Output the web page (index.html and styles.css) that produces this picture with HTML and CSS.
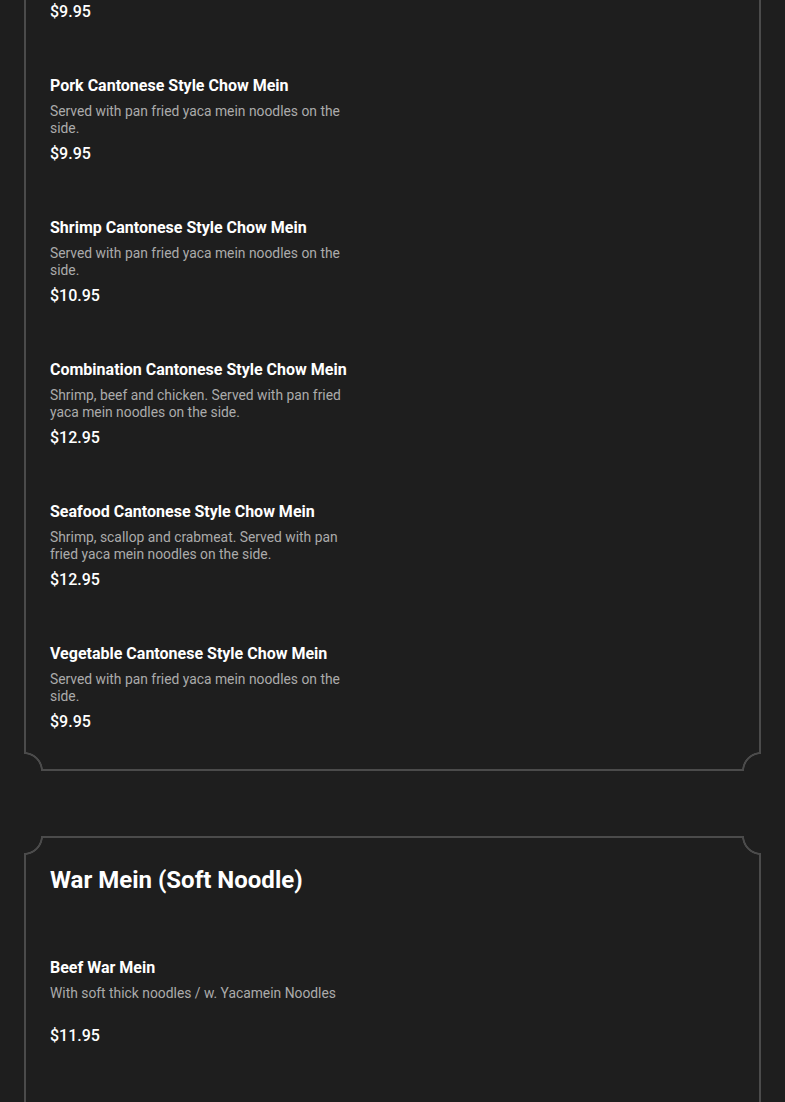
FILE: index.html
```html
<!DOCTYPE html>
<html lang="en">
<head>
<meta charset="utf-8">
<title>Menu</title>
<link rel="stylesheet" href="styles.css">
</head>
<body>
<main class="page">
  <section class="card card--continued">
    <span class="corner corner--bl"></span>
    <span class="corner corner--br"></span>
    <div class="items">
      <div class="item item--tail">
        <div class="item-price">$9.95</div>
      </div>
      <div class="item">
        <h3 class="item-title">Pork Cantonese Style Chow Mein</h3>
        <p class="item-desc">Served with pan fried yaca mein noodles on the side.</p>
        <div class="item-price">$9.95</div>
      </div>
      <div class="item">
        <h3 class="item-title">Shrimp Cantonese Style Chow Mein</h3>
        <p class="item-desc">Served with pan fried yaca mein noodles on the side.</p>
        <div class="item-price">$10.95</div>
      </div>
      <div class="item">
        <h3 class="item-title">Combination Cantonese Style Chow Mein</h3>
        <p class="item-desc">Shrimp, beef and chicken. Served with pan fried yaca mein noodles on the side.</p>
        <div class="item-price">$12.95</div>
      </div>
      <div class="item">
        <h3 class="item-title">Seafood Cantonese Style Chow Mein</h3>
        <p class="item-desc">Shrimp, scallop and crabmeat. Served with pan fried yaca mein noodles on the side.</p>
        <div class="item-price">$12.95</div>
      </div>
      <div class="item">
        <h3 class="item-title">Vegetable Cantonese Style Chow Mein</h3>
        <p class="item-desc">Served with pan fried yaca mein noodles on the side.</p>
        <div class="item-price">$9.95</div>
      </div>
    </div>
  </section>

  <section class="card">
    <span class="corner corner--tl"></span>
    <span class="corner corner--tr"></span>
    <span class="corner corner--bl"></span>
    <span class="corner corner--br"></span>
    <h2 class="card-title">War Mein (Soft Noodle)</h2>
    <div class="items">
      <div class="item">
        <h3 class="item-title">Beef War Mein</h3>
        <p class="item-desc">With soft thick noodles / w. Yacamein Noodles</p>
        <div class="item-price">$11.95</div>
      </div>
      <div class="item">
        <h3 class="item-title">Chicken War Mein</h3>
        <p class="item-desc">With soft thick noodles / w. Yacamein Noodles</p>
        <div class="item-price">$11.95</div>
      </div>
    </div>
  </section>
</main>
</body>
</html>
```

FILE: styles.css
```css
* {
  box-sizing: border-box;
}

html, body {
  margin: 0;
  padding: 0;
  background: #1e1e1e;
}

body {
  font-family: Roboto, "Noto Sans", "Liberation Sans", sans-serif;
  color: #ffffff;
  height: 1102px;
  overflow: hidden;
}

.page {
  display: flex;
  flex-direction: column;
  gap: 65px;
  padding: 0 24px;
}

.card {
  position: relative;
  border: 2px solid #4b4b4b;
  background: #1e1e1e;
  padding: 27px 24px 38px;
}

.card--continued {
  border-top: none;
  padding-top: 2px;
  padding-bottom: 37px;
}

.corner {
  position: absolute;
  width: 19px;
  height: 19px;
}

.corner--tl {
  top: -2px;
  left: -2px;
  background: radial-gradient(circle at 0 0, #1e1e1e 16.6px, #4b4b4b 17.2px, #4b4b4b 18.6px, #1e1e1e 19.2px);
}

.corner--tr {
  top: -2px;
  right: -2px;
  background: radial-gradient(circle at 100% 0, #1e1e1e 16.6px, #4b4b4b 17.2px, #4b4b4b 18.6px, #1e1e1e 19.2px);
}

.corner--bl {
  bottom: -2px;
  left: -2px;
  background: radial-gradient(circle at 0 100%, #1e1e1e 16.6px, #4b4b4b 17.2px, #4b4b4b 18.6px, #1e1e1e 19.2px);
}

.corner--br {
  bottom: -2px;
  right: -2px;
  background: radial-gradient(circle at 100% 100%, #1e1e1e 16.6px, #4b4b4b 17.2px, #4b4b4b 18.6px, #1e1e1e 19.2px);
}

.card-title {
  margin: 0 0 63px;
  font-size: 24px;
  line-height: 30px;
  font-weight: 700;
  color: #ffffff;
}

.items {
  display: flex;
  flex-direction: column;
  gap: 54px;
}

.item {
  width: 310px;
  display: flex;
  flex-direction: column;
}

.item-title {
  margin: 0;
  font-size: 16px;
  line-height: 20px;
  font-weight: 700;
  color: #ffffff;
}

.item-desc {
  margin: 7px 0 0;
  font-size: 13.85px;
  line-height: 17px;
  min-height: 34px;
  font-weight: 400;
  color: #ababab;
}

.item-price {
  margin-top: 7px;
  font-size: 16px;
  line-height: 20px;
  font-weight: 500;
  color: #ffffff;
}

.item--tail .item-price {
  margin-top: 0;
}
```
